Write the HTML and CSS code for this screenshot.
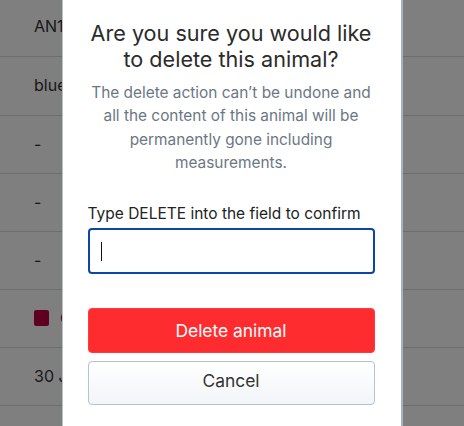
FILE: index.html
```html
<!DOCTYPE html>
<html lang="en">
<head>
<meta charset="utf-8">
<title>Delete animal</title>
<link rel="stylesheet" href="styles.css">
</head>
<body>
<div class="table">
  <div class="row">AN1</div>
  <div class="row">blue</div>
  <div class="row">-</div>
  <div class="row">-</div>
  <div class="row">-</div>
  <div class="row"><span class="swatch"></span>C</div>
  <div class="row">30 J</div>
  <div class="row"></div>
</div>
<div class="overlay">
  <div class="modal">
    <h1 class="title">Are you sure you would like to delete this animal?</h1>
    <p class="desc">The delete action can’t be undone and all the content of this animal will be permanently gone including measurements.</p>
    <label class="label" for="confirm">Type DELETE into the field to confirm</label>
    <div class="field">
      <input id="confirm" class="input" type="text">
      <span class="caret"></span>
    </div>
    <button class="btn btn-danger" type="button">Delete animal</button>
    <button class="btn btn-cancel" type="button">Cancel</button>
  </div>
</div>
</body>
</html>
```
FILE: styles.css
```css
* { box-sizing: border-box; }
html, body { margin: 0; padding: 0; height: 100%; overflow: hidden; }
body {
  font-family: Inter, "Noto Sans", sans-serif;
  background: #fff;
  color: #333;
}
.table { display: flex; flex-direction: column; }
.row {
  height: 58px;
  padding-left: 34px;
  padding-bottom: 2px;
  display: flex;
  align-items: center;
  font-size: 16px;
  color: #333;
  border-bottom: 1px solid #dcdcdc;
  white-space: nowrap;
}
.row:first-child { height: 57px; padding-bottom: 4px; }
.row:nth-child(2) { height: 59px; }
.swatch {
  width: 15px;
  height: 16px;
  border-radius: 2px;
  background: #be0042;
  margin-right: 11px;
}
.overlay {
  position: fixed;
  inset: 0;
  background: rgba(0, 0, 0, 0.5);
  display: flex;
  justify-content: center;
}
.modal {
  width: 341px;
  height: 100%;
  background: #fff;
  border-left: 1px solid #b9c1cb;
  border-right: 2px solid #a9b1bc;
  padding: 20px 26px 0 25px;
  display: flex;
  flex-direction: column;
}
.title {
  margin: 0;
  font-size: 21.6px;
  font-weight: 400;
  line-height: 26px;
  color: #2b2b2b;
  text-align: center;
}
.desc {
  margin: 9px 0 0;
  font-size: 15.4px;
  line-height: 23.4px;
  color: #6b7785;
  text-align: center;
}
.label {
  margin-top: 28px;
  font-size: 15.5px;
  line-height: 22px;
  color: #222;
}
.field {
  position: relative;
  margin-top: 3px;
}
.input {
  display: block;
  width: 100%;
  height: 46px;
  border: 2px solid #0b46a6;
  border-radius: 4px;
  outline: none;
  background: #fff;
  font: inherit;
  font-size: 16px;
  padding: 0 12px;
}
.caret {
  position: absolute;
  left: 13px;
  top: 14px;
  width: 1px;
  height: 19px;
  background: #111;
}
.btn {
  display: block;
  width: 100%;
  font-family: inherit;
  font-size: 17.4px;
  border-radius: 4px;
  cursor: pointer;
}
.btn-danger {
  margin-top: 34px;
  height: 45px;
  border: 1px solid #ff3a3a;
  background: #ff2c2f;
  color: #fff;
}
.btn-cancel {
  margin-top: 8px;
  height: 44px;
  padding-bottom: 6px;
  border: 1px solid #b7c2cf;
  background: linear-gradient(#ffffff, #f2f5f8);
  color: #333;
}
```
